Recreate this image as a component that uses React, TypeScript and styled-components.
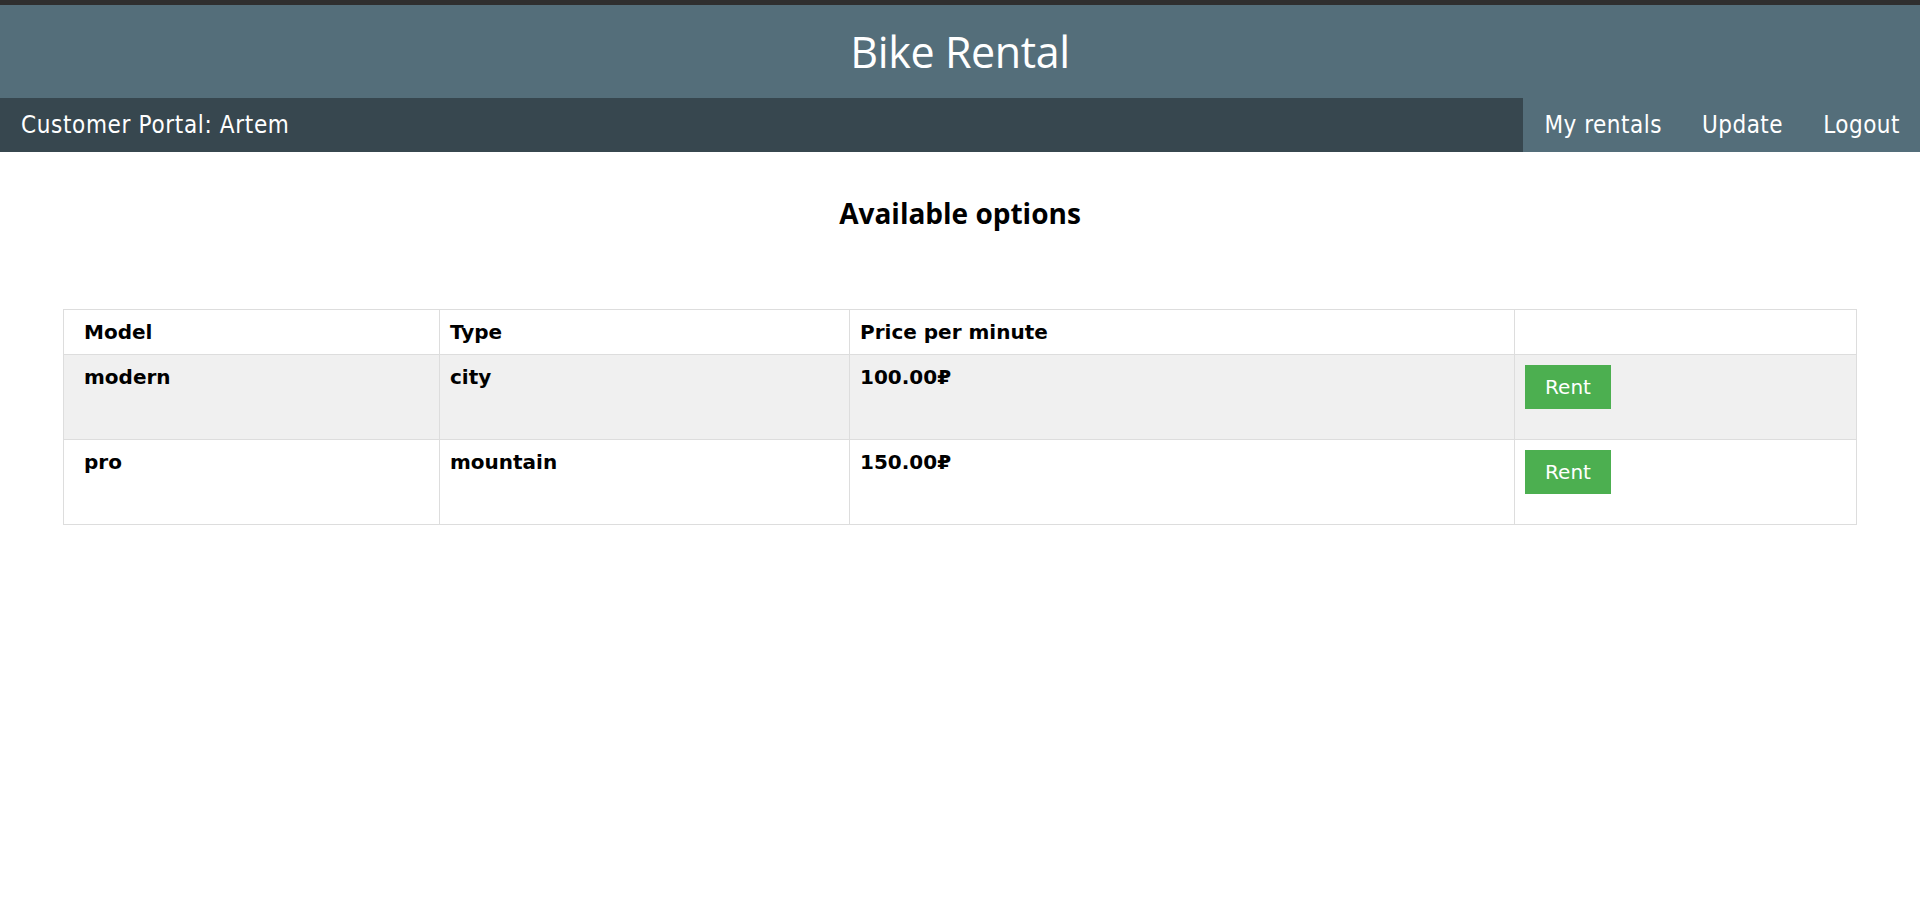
import React from "react";
import styled, { createGlobalStyle } from "styled-components";

const GlobalStyle = createGlobalStyle`
  html, body {
    margin: 0;
    padding: 0;
    background: #ffffff;
  }
  body {
    font-family: "DejaVu Sans Condensed", "DejaVu Sans", Verdana, sans-serif;
    color: #000;
  }
`;

const Page = styled.div`
  display: flex;
  flex-direction: column;
  min-height: 918px;
`;

const TopStrip = styled.div`
  height: 5px;
  background: #2f2f2f;
`;

const Header = styled.header`
  height: 93px;
  background: #546e7a;
  display: flex;
  align-items: center;
  justify-content: center;
`;

const Title = styled.h1`
  margin: 0;
  font-family: "Open Sans", "Noto Sans", sans-serif;
  font-weight: 400;
  font-size: 43px;
  letter-spacing: -0.4px;
  color: #ffffff;
`;

const NavBar = styled.nav`
  height: 54px;
  background: #37474f;
  display: flex;
  align-items: stretch;
  justify-content: space-between;
`;

const PortalLabel = styled.div`
  display: flex;
  align-items: center;
  padding-left: 21px;
  font-size: 24px;
  letter-spacing: 0.65px;
  color: #ffffff;
`;

const NavLinks = styled.div`
  display: flex;
  align-items: stretch;
  background: #546e7a;
  padding-left: 1px;
`;

const NavLink = styled.a`
  display: flex;
  align-items: center;
  padding: 0 20px;
  font-size: 24px;
  letter-spacing: 0.5px;
  color: #ffffff;
  text-decoration: none;
  cursor: pointer;
`;

const Main = styled.main`
  padding-top: 42px;
`;

const Heading = styled.h2`
  margin: 0 0 77px;
  text-align: center;
  font-family: "Open Sans", "Noto Sans", sans-serif;
  font-weight: 700;
  font-size: 28px;
`;

const Table = styled.table`
  margin: 0 63px;
  width: calc(100% - 126px);
  border-collapse: collapse;
  border: 1px solid #dddddd;
  table-layout: fixed;
  font-family: "DejaVu Sans", Verdana, sans-serif;
`;

const HeadCell = styled.th<{ $first?: boolean }>`
  text-align: left;
  font-size: 20px;
  font-weight: 700;
  line-height: 24px;
  padding: 10px 10px 10px ${(p) => (p.$first ? "20px" : "10px")};
  border: 1px solid #dddddd;
`;

const Row = styled.tr<{ $shaded?: boolean }>`
  background: ${(p) => (p.$shaded ? "#f0f0f0" : "#ffffff")};
`;

const Cell = styled.td<{ $first?: boolean }>`
  vertical-align: top;
  font-size: 20px;
  font-weight: 700;
  line-height: 24px;
  padding: 10px 10px 10px ${(p) => (p.$first ? "20px" : "10px")};
  border: 1px solid #dddddd;
`;

const ActionCell = styled.td`
  vertical-align: top;
  padding: 10px 10px 30px 10px;
  border: 1px solid #dddddd;
`;

const RentButton = styled.button`
  display: block;
  width: 86px;
  height: 44px;
  padding: 0;
  border: none;
  background: #4caf50;
  color: #ffffff;
  font-family: "DejaVu Sans", Verdana, sans-serif;
  font-size: 20px;
  cursor: pointer;
`;

const bikes = [
  { model: "modern", type: "city", price: "100.00₽" },
  { model: "pro", type: "mountain", price: "150.00₽" },
];

export default function App() {
  return (
    <Page>
      <GlobalStyle />
      <TopStrip />
      <Header>
        <Title>Bike Rental</Title>
      </Header>
      <NavBar>
        <PortalLabel>Customer Portal: Artem</PortalLabel>
        <NavLinks>
          <NavLink>My rentals</NavLink>
          <NavLink>Update</NavLink>
          <NavLink>Logout</NavLink>
        </NavLinks>
      </NavBar>
      <Main>
        <Heading>Available options</Heading>
        <Table>
          <colgroup>
            <col style={{ width: 376 }} />
            <col style={{ width: 410 }} />
            <col style={{ width: 665 }} />
            <col />
          </colgroup>
          <thead>
            <tr>
              <HeadCell $first>Model</HeadCell>
              <HeadCell>Type</HeadCell>
              <HeadCell>Price per minute</HeadCell>
              <HeadCell />
            </tr>
          </thead>
          <tbody>
            {bikes.map((b, i) => (
              <Row key={b.model} $shaded={i % 2 === 0}>
                <Cell $first>{b.model}</Cell>
                <Cell>{b.type}</Cell>
                <Cell>{b.price}</Cell>
                <ActionCell>
                  <RentButton>Rent</RentButton>
                </ActionCell>
              </Row>
            ))}
          </tbody>
        </Table>
      </Main>
    </Page>
  );
}
